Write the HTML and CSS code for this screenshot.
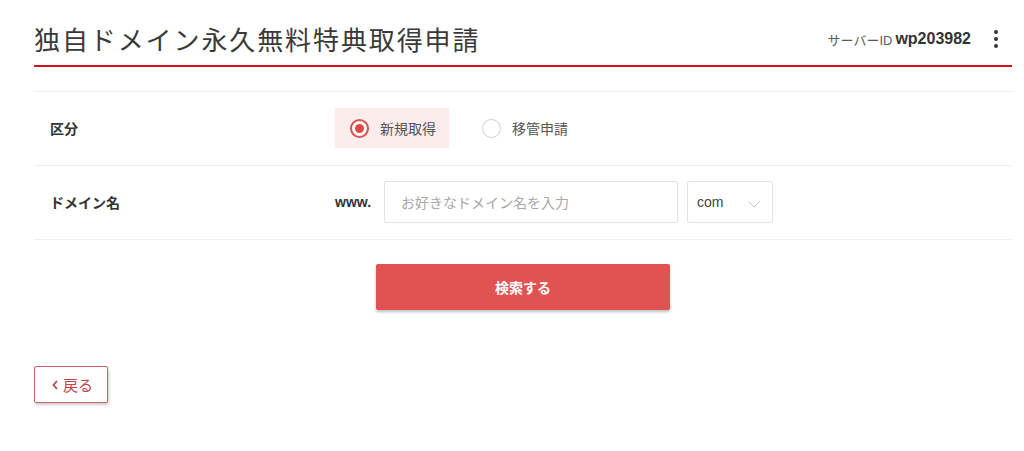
FILE: index.html
```html
<!DOCTYPE html>
<html lang="ja">
<head>
<meta charset="utf-8">
<title>独自ドメイン永久無料特典取得申請</title>
<link rel="stylesheet" href="styles.css">
</head>
<body>
<div class="page">
  <header class="header">
    <h1 class="title">独自ドメイン永久無料特典取得申請</h1>
    <div class="server">
      <span class="server-label">サーバーID</span>
      <span class="server-id">wp203982</span>
      <span class="kebab" aria-label="menu"><i></i><i></i><i></i></span>
    </div>
  </header>

  <div class="form">
    <div class="row row-first">
      <div class="label">区分</div>
      <div class="value radios">
        <label class="radio selected"><span class="circle"><span class="dot"></span></span><span>新規取得</span></label>
        <label class="radio"><span class="circle"></span><span>移管申請</span></label>
      </div>
    </div>
    <div class="row row-second">
      <div class="label">ドメイン名</div>
      <div class="value domain">
        <span class="www">www.</span>
        <div class="input"><span class="placeholder">お好きなドメイン名を入力</span></div>
        <div class="select"><span>com</span>
          <svg class="chev" width="12" height="7" viewBox="0 0 12 7"><polyline points="0.5,0.5 6,6 11.5,0.5" fill="none" stroke="#c4c4c4" stroke-width="1"/></svg>
        </div>
      </div>
    </div>
  </div>

  <div class="actions">
    <button class="search">検索する</button>
  </div>

  <button class="back"><svg class="arrow" width="6" height="10" viewBox="0 0 6 10"><polyline points="5,1 1.5,5 5,9" fill="none" stroke="#c2454b" stroke-width="1.8"/></svg><span>戻る</span></button>
</div>
</body>
</html>
```

FILE: styles.css
```css
* { box-sizing: border-box; }
html, body { margin: 0; padding: 0; background: #fff; }
body {
  font-family: "Liberation Sans", "Noto Sans CJK JP", sans-serif;
  color: #333;
  width: 1024px;
  height: 451px;
  overflow: hidden;
}
.page {
  margin-left: 34px;
  width: 978px;
}
.header {
  height: 67px;
  padding-top: 12px;
  display: flex;
  align-items: center;
  justify-content: space-between;
  border-bottom: 2px solid #d2121c;
}
.title {
  margin: 0;
  font-family: "Noto Sans CJK JP", sans-serif;
  font-weight: 400;
  font-size: 26px;
  letter-spacing: 1.9px;
  line-height: 34px;
  color: #3a3a3a;
}
.server {
  display: flex;
  align-items: center;
  padding-right: 4px;
}
.server-label {
  font-size: 13px;
  color: #5a5a5a;
  margin-right: 3px;
  margin-top: 2px;
}
.server-id {
  font-size: 16px;
  font-weight: 700;
  color: #333;
}
.kebab {
  display: flex;
  flex-direction: column;
  align-items: center;
  gap: 3px;
  width: 24px;
  margin-left: 13px;
}
.kebab i {
  display: block;
  width: 4px;
  height: 4px;
  border-radius: 50%;
  background: #333;
}
.form {
  margin-top: 24px;
  border-top: 1px solid #efefef;
}
.row {
  display: grid;
  grid-template-columns: 301px 1fr;
  align-items: center;
  border-bottom: 1px solid #efefef;
}
.row-first { padding: 16px 0 17px; }
.row-second { padding: 15px 0 16px; }
.label {
  padding-left: 16px;
  font-size: 14px;
  font-weight: 700;
  color: #333;
}
.radios {
  display: flex;
  align-items: center;
  gap: 18px;
}
.radio {
  display: flex;
  align-items: center;
  height: 40px;
  padding: 0 13px 0 15px;
  font-size: 14px;
  color: #555;
  gap: 11px;
}
.radio.selected {
  background: #fcecec;
}
.circle {
  width: 19px;
  height: 19px;
  border-radius: 50%;
  border: 1px solid #cfcfcf;
  background: #fff;
  display: flex;
  align-items: center;
  justify-content: center;
}
.selected .circle {
  border: 2px solid #d9534f;
}
.dot {
  width: 9px;
  height: 9px;
  border-radius: 50%;
  background: #e04848;
}
.domain {
  display: flex;
  align-items: center;
}
.www {
  font-size: 14px;
  font-weight: 700;
  color: #333;
  width: 49px;
}
.input {
  width: 294px;
  height: 42px;
  border: 1px solid #e3e3e3;
  border-radius: 2px;
  display: flex;
  align-items: center;
  padding-left: 16px;
}
.placeholder {
  font-size: 14px;
  color: #a8a8a8;
}
.select {
  margin-left: 9px;
  width: 86px;
  height: 42px;
  border: 1px solid #e3e3e3;
  border-radius: 2px;
  display: flex;
  align-items: center;
  justify-content: space-between;
  padding: 0 12px 0 9px;
  font-size: 14px;
  color: #444;
}
.chev { margin-top: 4px; }
.actions {
  display: flex;
  justify-content: center;
  margin-top: 24px;
}
.search {
  width: 294px;
  height: 46px;
  border: none;
  border-radius: 2px;
  background: #e15253;
  color: #fff;
  font-family: "Noto Sans CJK JP", sans-serif;
  font-size: 14px;
  font-weight: 700;
  box-shadow: 0 2px 3px rgba(0, 0, 0, 0.25);
}
.back {
  display: flex;
  align-items: center;
  margin-top: 56px;
  width: 74px;
  height: 37px;
  padding: 0 0 0 17px;
  border: 1px solid #c9646a;
  border-radius: 2px;
  background: #fff;
  color: #c2454b;
  font-family: "Noto Sans CJK JP", sans-serif;
  font-size: 15px;
  box-shadow: 1px 2px 3px rgba(0, 0, 0, 0.2);
}
.arrow {
  margin-right: 5px;
}
```
